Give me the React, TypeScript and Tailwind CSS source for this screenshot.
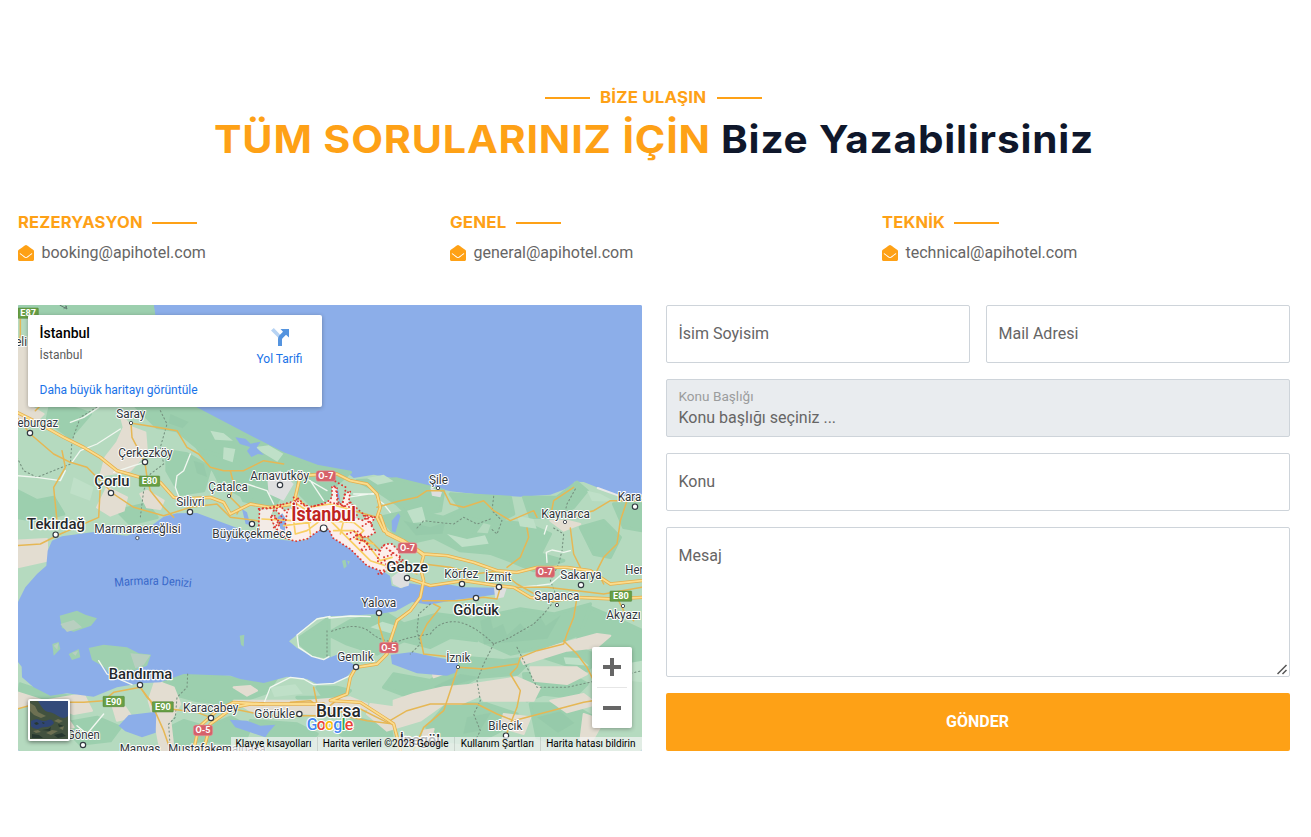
import React from "react";
import { FaEnvelopeOpen } from "react-icons/fa";

type Label = [text: string, x: number, y: number, width: number, size?: number];

const townLabels: Label[] = [
  ["Saray", 298, 343, 87], ["Çerkezköy", 304, 458, 163], ["Lüleburgaz", -43, 370, 166], ["Kırklareli", -105, 126, 135],
  ["Arnavutköy", 700, 527, 176], ["Çatalca", 574, 562, 119], ["Silivri", 478, 607, 85],
  ["Marmaraereğlisi", 232, 687, 259], ["Büyükçekmece", 586, 702, 238], ["Karacabey", 498, 1225, 166],
  ["Görükle", 712, 1241, 122], ["Gönen", 150, 1305, 98], ["Manyas", 308, 1346, 122],
  ["Mustafakemalpaşa", 454, 1346, 292], ["Gemlik", 961, 1072, 109], ["İznik", 1288, 1075, 72],
  ["Körfez", 1282, 823, 102], ["İzmit", 1404, 832, 79], ["Sakarya", 1630, 826, 124], ["Hendek", 1825, 811, 116],
  ["Sapanca", 1552, 889, 135], ["Yalova", 1033, 910, 105], ["Akyazı", 1768, 946, 103],
  ["Bilecik", 1414, 1279, 102], ["Şile", 1236, 539, 57], ["Kaynarca", 1573, 641, 146], ["Karasu", 1802, 592, 108],
];

const cityLabels: Label[] = [
  ["Çorlu", 232, 545, 105, 45], ["Tekirdağ", 30, 675, 174, 45], ["Bandırma", 275, 1126, 191, 45],
  ["Bursa", 897, 1240, 134, 54], ["İnegöl", 1148, 1322, 121, 45], ["Gebze", 1108, 803, 125, 45], ["Gölcük", 1309, 934, 137, 45],
];

const greenBadges: Label[] = [["E80", 367, 516, 61], ["E90", 258, 1177, 64], ["E90", 406, 1193, 63], ["E80", 1779, 861, 65], ["E87", 3, 12, 61]];
const redBadges: Label[] = [["O-7", 897, 500, 59], ["O-7", 1143, 716, 57], ["O-7", 1556, 788, 57], ["O-5", 1087, 1015, 57], ["O-5", 529, 1263, 58]];

const dots: [number, number, number][] = [
  [342, 357, 5], [384, 474, 8], [282, 567, 8], [39, 387, 8], [789, 543, 8], [636, 576, 5], [519, 624, 8],
  [116, 692, 8], [361, 702, 5], [705, 660, 8], [920, 673, 10], [369, 1143, 8], [582, 1242, 8], [847, 1230, 8],
  [198, 1323, 8], [1017, 1089, 8], [1323, 1089, 5], [1170, 822, 8], [1335, 840, 8], [1446, 849, 8],
  [1377, 882, 8], [1086, 927, 8], [1692, 843, 8], [1620, 903, 5], [1818, 906, 5], [1263, 552, 5],
  [1644, 654, 5], [1854, 608, 8], [1467, 1295, 8],
];

const forest = [
  "M0 0L405 0L410 32L0 32Z",
  "M100 305Q150 300 220 330L160 400L90 350Z",
  "M350 300L520 305L700 400L800 450L900 487L1000 505L960 540L880 520L830 500L800 560L770 610L680 590L650 520L590 500L540 430L480 380L420 370Z",
  "M450 440L510 450L580 490L560 560L490 570L450 500Z", "M0 560L60 590L110 580L140 630L60 650L0 640Z",
  "M300 620L390 600L420 640L340 660Z", "M560 440L660 470L720 540L700 590L610 540Z",
  "M840 530L960 530L940 590L880 600L850 570Z", "M1020 530L1140 525L1280 560L1270 620L1180 640L1140 600L1080 560Z",
  "M1090 640L1180 620L1280 640L1370 600L1420 620L1370 690L1500 700L1450 750L1330 740L1250 700L1160 720Z",
  "M1300 570L1480 580L1490 630L1430 660L1350 640Z", "M1520 580L1620 580L1680 535L1710 560L1670 610L1610 640L1540 640Z",
  "M1430 650L1530 660L1600 690L1570 750L1640 770L1550 800L1480 770L1400 740Z",
  "M1690 670L1760 650L1810 700L1780 760L1730 750Z", "M1790 600L1875 600L1875 680L1820 670Z",
  "M1000 950L1110 930L1160 960L1260 930L1340 940L1400 960L1380 1010L1300 1000L1240 1030L1160 1010L1080 1050L990 1020L930 990Z",
  "M850 1000L936 942L936 1060L885 1050L850 1020Z",
  "M1370 945L1510 915L1610 930L1720 900L1690 990L1580 1030L1480 1050L1390 1010Z",
  "M1720 910L1790 940L1875 980L1875 1090L1790 1080L1740 1030L1680 1010Z",
  "M1340 1060L1460 1070L1550 1060L1500 1110L1380 1120L1290 1170L1180 1180L1100 1150L1130 1110L1240 1130Z",
  "M440 1120L560 1110L700 1130L780 1120L750 1165L650 1200L540 1190L450 1165Z",
  "M500 1250L570 1270L640 1240L700 1270L680 1320L550 1310L470 1330L460 1270Z",
  "M10 1140L100 1170L190 1180L150 1215L70 1190L5 1180Z", "M130 1260L240 1240L310 1270L280 1310L190 1320Z",
  "M700 1250L840 1260L900 1290L860 1330L760 1310Z", "M1010 1240L1120 1270L1130 1330L1020 1320L970 1290Z",
  "M1290 1200L1410 1200L1500 1230L1450 1280L1370 1320L1280 1310L1230 1270Z",
  "M1520 1110L1640 1100L1710 1140L1670 1180L1580 1170L1530 1190Z",
  "M1540 1200L1660 1200L1730 1240L1710 1310L1640 1330L1560 1300Z",
  "M1640 1010L1750 1060L1710 1100L1640 1080L1580 1060Z",
  "M840 1180L920 1180L900 1150L960 1150L1000 1160L980 1180L890 1220Z",
];

const plains = [
  "M0 130L38 120L38 305L80 330L60 350L0 360Z", "M310 330L345 370L385 385L390 445L340 500L250 515L265 460L300 415L320 370Z",
  "M270 550L330 580L320 620L280 635L240 610Z", "M0 710L90 705L90 770L0 790Z",
  "M370 570L390 560L440 590L430 615L390 610Z",
  "M415 1130L470 1150L490 1200L460 1250L470 1338L430 1338L415 1260L395 1190Z",
  "M650 1150L700 1146L720 1160L690 1175Z", "M650 1190L870 1190L1000 1180L1050 1200L1050 1215L900 1230L700 1220Z",
  "M0 1165L80 1190L200 1170L225 1220L170 1230L90 1195L0 1210Z", "M285 1200L325 1210L345 1240L300 1250Z",
  "M1130 1190L1190 1170L1280 1150L1390 1140L1400 1170L1330 1200L1280 1200L1210 1250L1110 1280L1050 1230L1060 1200L1130 1210Z",
  "M1510 1060L1630 1020L1740 990L1780 995L1740 1030L1650 1040L1520 1080Z",
  "M1540 1090L1680 1090L1710 1110L1650 1140L1550 1130Z", "M1370 1140L1500 1120L1570 1150L1550 1190L1400 1190Z",
  "M1600 1190L1700 1170L1740 1200L1650 1225Z", "M1460 1230L1540 1240L1520 1290L1450 1270Z",
  "M1220 1280L1250 1275L1240 1310L1215 1310Z", "M1700 1230L1760 1250L1720 1320L1690 1310Z",
  "M1600 650L1650 650L1690 660L1640 680Z", "M90 1250L150 1240L170 1270L110 1280Z", "M1240 1080L1320 1095L1250 1120Z",
];

const motorways = [
  "M0 325L60 355L140 400L200 430L250 460L300 500L370 520L430 535L470 580L500 585L580 580L620 595L640 630L700 600L760 610L830 600L850 515L935 510L960 510L1000 530L1050 540L1080 570L1090 610L1080 640L1100 680L1160 710L1220 750L1290 755L1370 775L1440 800L1500 805L1560 790L1650 790L1720 800L1780 840L1875 830",
  "M1090 635L1110 690L1190 730L1220 755L1210 790L1220 830L1210 880L1180 920L1140 950L1120 1010L1110 1050L1080 1080L1017 1090L1000 1120L990 1170L940 1190L1030 1195L1100 1240L1130 1260L1150 1338",
  "M1180 825L1240 845L1340 830L1440 845L1490 850L1540 880L1610 890L1680 880L1790 885L1875 880",
  "M560 1338L580 1260L650 1210L700 1200L800 1200L920 1200",
  "M530 1338L545 1270L600 1220L650 1195L740 1200",
];
const roads = [
  "M0 340L40 390L110 450L160 475L210 490L250 530L290 570L350 610L440 635L520 610L600 600L640 640L720 650L800 660L890 640L1010 620L1080 640",
  "M342 357L345 400L384 475L390 520L400 560L440 610L470 640", "M10 45V95L3 120M55 320L70 305M340 357L420 370L480 380L510 430L545 450L580 490L620 500L680 500L740 470L800 480",
  "M250 545L245 640L130 690L70 720L0 725", "M135 440L145 490L110 550L120 650", "M640 500L650 540L640 580L670 610L660 630",
  "M1080 610L1150 590L1200 580L1230 560L1280 560L1300 600L1340 610L1400 590L1430 620L1480 650L1550 620L1560 640",
  "M1600 640L1610 590L1670 550M1650 640L1730 620L1780 590L1875 590M1830 590L1810 650L1800 720L1760 760L1740 800L1760 840",
  "M1530 672L1535 700L1510 760L1470 790M1660 672L1670 750L1690 790M1875 850L1760 870L1680 860L1590 850L1480 850",
  "M860 640L950 640L1000 690L1050 700L1110 760L1160 790L1200 810", "M1220 780L1300 790L1370 810L1450 800L1500 840L1570 880",
  "M1216 890L1320 890L1400 880L1440 885L1450 850M1086 930L1085 960L1100 1010L1105 1050M1250 900L1270 910L1230 960L1210 1000L1220 1050L1310 1060",
  "M1680 880L1670 940L1650 990L1640 1020L1560 1040L1510 1060L1500 1090L1480 1110L1510 1160L1500 1210L1480 1260L1467 1295",
  "M1323 1090L1300 1160L1280 1220L1220 1270L1190 1338", "M0 1215L90 1190L150 1195L200 1195L260 1190L290 1165L370 1150L400 1190L440 1280L460 1338",
  "M460 1215L540 1225L580 1240M650 1215L750 1235L900 1235L1030 1215L1110 1255L1170 1220L1240 1200L1380 1200L1440 1230L1490 1250L1700 1195L1790 1180",
  "M890 1150L900 1200L920 1240M1323 1090L1400 1095L1500 1080M1640 1010L1680 1050L1710 1090L1730 1130M1850 950L1820 920L1800 880",
  "M370 1150L390 1180L420 1210L460 1210M970 1180L920 1220L880 1190L820 1195M1130 1260L1050 1250L1000 1240",
];
const lanes = [
  "M0 515L60 520L130 530L145 500M160 355L200 340L245 310M165 475L190 440L240 420L310 375",
  "M520 450L500 500L480 515L475 550L490 590M290 505L350 485L384 475",
  "M690 540L750 560L770 600M870 525L930 560M1010 570L1070 570M1080 585L1100 600L1120 625M880 530L920 590M990 580L1070 568",
  "M1590 665L1582 690M1590 775L1588 745L1605 738L1640 745L1660 740",
  "M1500 850L1560 845L1600 840L1635 810M180 1265L210 1290L260 1230M740 1200L760 1150L820 1120L860 1125L890 1142L950 1138L1000 1115",
  "M245 1070L270 1110L345 1142M939 937L900 945L840 993L845 1030L885 1057L920 1067L936 1058M936 942L1000 936L1060 938",
];
const borders =
  "M430 320L450 360L430 430L440 480L400 510L380 560L370 640M240 310L190 340L165 410L160 480L110 500L60 520L20 500L0 460M1430 577L1425 620L1455 650L1440 690L1420 672M1200 672L1220 650L1260 655L1310 660L1340 640L1380 660L1420 645M1675 555L1650 600L1640 640M1610 672L1640 690L1635 740L1625 780L1600 830L1620 880L1580 930L1550 960L1480 1000L1430 1020Q1380 970 1330 955Q1270 945 1240 990Q1170 1000 1150 1010Q1100 1020 1060 985T936 985M1240 900L1205 930L1200 980L1210 1020L1180 1050M1430 1020L1400 1080L1380 1130L1390 1190L1370 1230L1390 1280L1360 1338M1500 1030L1540 1110L1560 1150L1650 1150L1740 1130L1790 1120L1875 1100M512 1110L510 1150L480 1180L475 1240L455 1260L460 1338M930 980L930 1060";

const districtShape =
  "M725 615L770 610L800 645L785 665L775 635L760 640L780 680L800 700L835 712L870 705L905 680L935 675L948 702L1000 735L1050 785L1090 800L1095 810L1115 790L1150 765L1145 740L1125 720L1105 720L1085 740L1060 735L1050 715L1020 705L1015 690L1050 700L1075 685L1060 660L1075 640L1050 635L1040 650L1010 640L1015 610L995 595L1000 560L985 570L975 600L960 600L960 550L945 545L945 580L930 595L880 610L860 600L840 580L835 610L800 620L790 600L755 615L740 612Z";

const districtDots =
  "M728 618L725 655L727 690M955 532L990 552M955 550L965 595M985 560L975 610L1010 590M940 595L1000 610L1025 640M1010 605L1050 640L1070 670M1000 705L1030 690L1050 720L1030 740L1060 735M1100 725L1130 750L1100 760L1110 790L1085 812L1080 800M1120 740L1160 770L1130 780L1150 790M770 620L800 600L840 590L870 610L920 600M765 635L790 655L770 670L795 685M810 625L805 660L820 700M830 580L845 620M1040 635L1055 655L1030 670M1055 640L1070 640M990 690L1020 680L1040 705L1020 725M1090 740L1080 770L1100 780";

function MapCanvas() {
  return (
    <svg viewBox="3 3 1872 1338" preserveAspectRatio="none" className="block h-full w-full" fontFamily="Roboto, sans-serif" aria-label="İstanbul">
      <rect width="1880" height="1345" fill="#8caee9" />
      <path d="M0 0L410 0L414 45L430 240L520 308L600 348L700 403L800 450L840 465L900 485L950 500L985 502L1010 522L1070 512L1140 525L1230 545L1300 562L1400 573L1510 578L1600 572L1640 557L1665 545L1672 533L1700 534L1740 550L1800 573L1875 590V1345H0Z" fill="#b5dabf" />
      <g fill="#9ccfae" stroke="#9ccfae" strokeWidth="10" strokeLinejoin="round">
        {forest.map((d) => <path key={d} d={d} />)}
      </g>
      <g fill="#94c8a7" opacity=".65">
        <path d="M460 330l55 24-18 19-42-15zM530 470l30 9 10 40-30-11zM1160 650l80 20 45-15-9 34-80 5zM1390 950l30-12 8 36 30-14 12 33 40-35 20 24 38-46 18 29 45-31-40 70-190 17zM1250 1148l80-38 60 10-120 36zM1720 1010l50 26 70 6-11 28-72-19zM1350 1240l72-14-34 54-49 9zM1560 1240l70-18 42 35-49 29z" />
      </g>
      <g fill="#bfe0c8">
        <path d="M580 380l40 8 28 22-54-3zM620 430l35 5-8 40-29-10zM710 430l45-6 44 25-18 24zM1050 522l50-10 30 20-48 10zM1170 620l45-12 12 45-38 4zM1500 635l49 10 10 29-50-7zM1710 560l40 9 45 24-70-2zM1290 690l60 15 54-11 11 25-80 10zM1060 970l60 18 20-22-44-13zM1640 1060l50 2 26 23-70-5zM1820 1080l55-10v65l-42-5zM170 520l60 30-11 40-60-22zM500 1210l60-5 20 20-70 3zM760 1150l75-9 22 28-85 10zM1160 1310l55-14 16 34-65 8z" />
      </g>
      <g fill="#e3ddd1" stroke="#e3ddd1" strokeWidth="6" strokeLinejoin="round">
        {plains.map((d) => <path key={d} d={d} />)}
      </g>

      <path d="M0 900L25 850L60 810L88 785L92 740L105 710L135 697L230 684L330 695L390 675L440 638L480 628L540 627L610 653L669 675L719 703L770 705L834 712L870 708L899 680L939 678L949 702L1009 740L1079 790L1119 815L1124 845L1154 853L1179 838L1221 845L1276 838L1340 850L1440 851L1444 870L1366 882L1316 887L1236 902L1186 894L1136 922L1086 930L1016 934L936 937L900 942L840 992L816 1012L840 1032L885 1057L920 1067L966 1050L1017 1087L986 1122L956 1137L900 1140L870 1125L810 1118L740 1137L670 1125L640 1115L500 1110L430 1135L370 1138L300 1150L230 1178L150 1168L100 1175L50 1150L15 1120L14 1088L0 1070Z" fill="#8caee9" />
      <path d="M1121 1052L1186 1044L1250 1058L1324 1072L1318 1105L1290 1115L1200 1108L1125 1080ZM305 1265L335 1233L418 1223L416 1286L375 1300L325 1282ZM638 1247L690 1250L730 1265L775 1262L755 1285L745 1300L700 1285L655 1270ZM655 400l30 4 16 15 30-6-12 18 22 22-18-3-20 9-13-18 9-12-30-9zM675 615l15 10 10 38-14-3zM950 540l14 20 8 40-14-28zM1124 650l20-22 6 8-15 50-10-5z" fill="#8caee9" />
      <path d="M1124 820L1150 800L1180 815L1175 845L1150 852L1128 840ZM1430 845L1470 850L1460 880L1435 885ZM750 515L790 500L830 540L800 590L755 570ZM1240 550L1275 565L1270 580L1245 575Z" fill="#dedfdf" />
      <path d="M215 1032L260 1022L330 1030L365 1048L402 1052L390 1085L350 1100L310 1105L280 1112L262 1090L225 1068ZM128 935L180 920L205 932L240 943L222 965L170 983L135 972ZM106 1020L125 1014L130 1035L110 1055ZM155 1050L185 1035L190 1060L165 1068ZM668 995L682 992L680 1028L672 1022ZM975 770l10-3 4 20-8 7zM990 770l8 2 -3 10z" fill="#9fd0b0" />
      <path d="M130 960l40-12 25 22-45 14zM340 1048l60 5-20 30-25 10zM110 1025l14-8-3 20zM165 1046l18-5-7 14z" fill="#b8cfc0" />

      <g fill="none" strokeLinejoin="round" strokeLinecap="round">
        <path d={borders} stroke="#76917f" strokeWidth="3.200" strokeDasharray="4 8" />
        <g stroke="#f1f7f0" strokeWidth="4">{lanes.map((d) => <path key={d} d={d} />)}</g>
        <path d="M1742 552L1805 575L1840 584" stroke="#e8e8e8" strokeWidth="6" />
        <g stroke="#e6b754" strokeWidth="4.5">{roads.map((d) => <path key={d} d={d} />)}</g>
      </g>
      <path d="M728 618L770 612L760 640L780 690L728 694Z" fill="#f3ebe6" />
      <path d={districtShape} fill="#fcefec" />
      <path d="M782 640l14-12 10 16-2 38-14-8z" fill="#8caee9" />
      <g fill="none" strokeLinejoin="round" strokeLinecap="round">
        <g stroke="#e6ae4b" strokeWidth="10">{motorways.map((d) => <path key={d} d={d} />)}</g>
        <g stroke="#fbdc8c" strokeWidth="5.5">{motorways.map((d) => <path key={d} d={d} />)}</g>
        <g stroke="#f8cf62" strokeWidth="5">
          <path d="M735 645L830 650L835 690L870 680L910 650L1010 655L1040 680L1015 705L1070 720M840 600L870 620L880 690M950 680L1010 680L1050 720L1090 770L1125 760M940 650L990 700L1060 770L1120 790M980 650L970 690M800 665L880 655" />
          <path d="M840 580L870 610L940 600L1010 620" />
        </g>
        <path d={districtShape} stroke="#dc3a34" strokeWidth="5.500" strokeDasharray="0.5 11" />
        <path d={districtDots} stroke="#dc3a34" strokeWidth="5.500" strokeDasharray="0.5 11" />
      </g>

      <path d="M128 3l22 12-4-10M140 14l10-8" fill="none" stroke="#5f7a70" strokeWidth="3" />
      <g fill="#fff" stroke="#333a42">
        {dots.map(([x, y, r]) => <circle key={`${x}-${y}`} cx={x} cy={y} r={r} strokeWidth={r < 6 ? 2.5 : 3.6} />)}
      </g>

      <g fontSize="38" fill="#30363b" stroke="#fff" strokeWidth="6" strokeLinejoin="round" paintOrder="stroke">
        {townLabels.map(([t, x, y, w]) => <text key={t} x={x} y={y} textLength={w} lengthAdjust="spacingAndGlyphs">{t}</text>)}
      </g>
      <g fontWeight="500" fill="#24282c" stroke="#fff" strokeWidth="7" strokeLinejoin="round" paintOrder="stroke">
        {cityLabels.map(([t, x, y, w, s]) => <text key={t} x={x} y={y} fontSize={s} textLength={w} lengthAdjust="spacingAndGlyphs">{t}</text>)}
      </g>
      <text x="823" y="651" fontSize="58" fontWeight="700" textLength="194" lengthAdjust="spacingAndGlyphs" fill="#c0241f" stroke="#fff" strokeWidth="7" strokeLinejoin="round" paintOrder="stroke">İstanbul</text>
      <path id="seaCurve" d="M293 848Q410 835 530 851" fill="none" />
      <text fontSize="36" fill="#3868c9"><textPath href="#seaCurve" textLength="230" lengthAdjust="spacingAndGlyphs">Marmara Denizi</textPath></text>

      <g fontSize="26" fontWeight="700" fill="#fff" textAnchor="middle">
        {greenBadges.map(([t, x, y, w]) => (
          <g key={`${x}`}><rect x={x} y={y} width={w} height="31" rx="2" fill="#689f45" stroke="#4f8137" strokeWidth="1.5" /><text x={x + w / 2} y={y + 25} textLength="47" lengthAdjust="spacingAndGlyphs">{t}</text></g>
        ))}
        {redBadges.map(([t, x, y, w]) => (
          <g key={`${x}`}><rect x={x} y={y} width={w} height="32" rx="8" fill="#d6616a" stroke="#e9999e" strokeWidth="1.5" /><text x={x + w / 2} y={y + 25} textLength="45" lengthAdjust="spacingAndGlyphs">{t}</text></g>
        ))}
      </g>
      <text x="869" y="1277" fontSize="48" fontWeight="500" fontFamily="Roboto, sans-serif" textLength="140" stroke="#fff" strokeWidth="6" strokeLinejoin="round" paintOrder="stroke">
        <tspan fill="#4285f4">G</tspan><tspan fill="#ea4335">o</tspan><tspan fill="#fbbc05">o</tspan><tspan fill="#4285f4">g</tspan><tspan fill="#34a853">l</tspan><tspan fill="#ea4335">e</tspan>
      </text>
    </svg>
  );
}

function PlaceCard() {
  return (
    <div className="absolute left-[10px] top-[10px] flex h-[92px] w-[294px] justify-between rounded-[2px] bg-white pl-3 pr-[19px] shadow-[0_1px_4px_rgba(0,0,0,0.3)]">
      <div className="flex flex-col whitespace-nowrap">
        <div className="mt-2.5 text-[14px] font-medium leading-4 text-black">İstanbul</div>
        <div className="mt-[6px] text-[12px] leading-4 text-[#5b5b5b]">İstanbul</div>
        <div className="mt-[19px] text-[12px] leading-4 text-[#1a73e8]">Daha büyük haritayı görüntüle</div>
      </div>
      <div className="flex flex-col items-center pt-[12px] text-[12px] leading-4 text-[#1a73e8]">
        <svg width="20" height="20" viewBox="0 0 20 20" className="mb-[4px]">
          <path d="M1 3.5L3.8 1L10 7.5V11L8.5 11Z" fill="#b7d3f3" />
          <path d="M8 19V12Q8 9.800 9.500 8.300L13 4.800L10.500 2H19V10.500L16 7.800L12.500 11.300Q12 11.800 12 12.800V19Z" fill="#5594df" />
        </svg>
        Yol Tarifi
      </div>
    </div>
  );
}

function MapPanel() {
  return (
    <div className="relative h-[446px] overflow-hidden rounded-[2px] bg-[#8caee9]">
      <MapCanvas />
      <PlaceCard />
      <div className="absolute bottom-[10px] left-[10px] h-[42px] w-[42px] rounded-[2px] border-2 border-white bg-[#384c3d] shadow-[0_1px_4px_rgba(0,0,0,0.5)]">
        <svg viewBox="0 0 38 38" className="block h-full w-full">
          <rect width="38" height="38" fill="#42523f" />
          <path d="M8 0H38V15Q34 19 28 15T18 11T8 0Z" fill="#344b7a" />
          <path d="M1 20Q6 17 10 19T18 19T24 22Q21 26 16 26T8 28Q3 28 1 25Z" fill="#2f4575" />
          <path d="M0 2l5 3 3 6 8 4-5 2-7-3-4-4zM24 20l4-2 5 2-4 2zM3 30l5-1 3 2-5 1zM16 32l6-3 6 1-7 4zM29 27l5-2-1 4z" fill="#6d7052" />
          <path d="M4 22l3-1 2 2-3 1zM12 21l3 1-2 1zM12 29l6-1 3-2-1 4zM28 23l6 2-5 1zM2 33l7 1 4 3H2zM24 34l8-2 4 3-8 2z" fill="#27382f" />
        </svg>
      </div>
      <div className="absolute bottom-[23px] right-[10px] flex h-[81px] w-[40px] flex-col items-center rounded-[2px] bg-white shadow-[0_1px_4px_rgba(0,0,0,0.3)]">
        <div className="flex h-10 items-center">
          <svg width="18" height="18" viewBox="0 0 18 18" fill="#666"><path d="M7 0H11V7H18V11H11V18H7V11H0V7H7Z" /></svg>
        </div>
        <div className="h-px w-[30px] bg-[#e6e6e6]" />
        <div className="flex h-10 items-center"><div className="h-1 w-[18px] bg-[#666]" /></div>
      </div>
      <div className="absolute bottom-0 right-0 flex h-[14px] w-[411px] items-center justify-between whitespace-nowrap bg-[#f5f5f5]/70 pl-[5px] pr-[6px] text-[10px] leading-[14px] text-black">
        <span>Klavye kısayolları</span>
        <span className="-mr-[1px] h-full w-px bg-black/10" />
        <span>Harita verileri ©2023 Google</span>
        <span className="h-full w-px bg-black/10" />
        <span>Kullanım Şartları</span>
        <span className="h-full w-px bg-black/10" />
        <span>Harita hatası bildirin</span>
      </div>
    </div>
  );
}

function Contact({ title, mail, titleClass }: { title: string; mail: string; titleClass: string }) {
  return (
    <div>
      <h6 className="flex h-5 items-center gap-[10px] whitespace-nowrap font-['Inter'] text-[15.5px] font-bold text-[#fea116]">
        <span className={titleClass}>{title}</span>
        <span className="h-[2px] w-[45px] bg-[#fea116]" />
      </h6>
      <p className="mt-2 flex h-6 items-center gap-2 text-[16px] text-[#666565]">
        <FaEnvelopeOpen className="mb-px text-[#fea116]" size={16} />
        {mail}
      </p>
    </div>
  );
}

function Field({ id, label }: { id: string; label: string }) {
  return (
    <div className="relative h-[58px]">
      <input id={id} className="h-full w-full rounded-[2px] border border-[#ced4da] bg-white px-3 outline-none" />
      <label htmlFor={id} className="absolute left-[13px] top-[17px] leading-6">{label}</label>
    </div>
  );
}

export default function App() {
  return (
    <main className="min-h-[837px] w-full bg-white pl-[17.5px] pt-[88px] font-['Roboto',sans-serif] text-[16px] text-[#666565]">
      <div className="w-[1272px]">
        <header className="flex flex-col items-center whitespace-nowrap font-['Inter'] font-bold text-[#fea116]">
          <h6 className="flex h-5 items-center gap-[10px] text-[15.5px]">
            <span className="h-[2px] w-[45px] bg-[#fea116]" />
            <span className="w-[107px] origin-left scale-x-[1.09] tracking-[0.01em]">BİZE ULAŞIN</span>
            <span className="h-[2px] w-[45px] bg-[#fea116]" />
          </h6>
          <h1 className="mt-[7px] flex h-12 items-center text-[38.5px] leading-[48px]">
            <span className="w-[507px] origin-left scale-x-[1.072] tracking-[0.02em]">TÜM SORULARINIZ İÇİN</span>
            <span className="w-[372px] origin-left scale-x-[1.052] tracking-[0.02em] text-[#0f172b]">Bize Yazabilirsiniz</span>
          </h1>
        </header>

        <section className="mt-[50px] grid grid-cols-3 gap-6">
          <Contact title="REZERYASYON" mail="booking@apihotel.com" titleClass="w-[124px] origin-left scale-x-[1.068] tracking-[0.01em]" />
          <Contact title="GENEL" mail="general@apihotel.com" titleClass="w-[56px] origin-left scale-x-[1.09] tracking-[0.01em]" />
          <Contact title="TEKNİK" mail="technical@apihotel.com" titleClass="w-[62px] origin-left scale-x-[1.065] tracking-[0.01em]" />
        </section>

        <section className="mt-[40px] grid grid-cols-2 gap-6">
          <MapPanel />
          <form className="flex flex-col gap-4">
            <div className="grid grid-cols-2 gap-4">
              <Field id="name" label="İsim Soyisim" />
              <Field id="email" label="Mail Adresi" />
            </div>
            <div className="flex h-[58px] flex-col rounded-[2px] border border-[#ced4da] bg-[#e9ecef] pl-3 pt-[6px]">
              <span className="text-[13.6px] leading-5 text-[#9b9c9d]">Konu Başlığı</span>
              <span className="leading-6">Konu başlığı seçiniz ...</span>
            </div>
            <Field id="subject" label="Konu" />
            <div className="relative h-[150px]">
              <textarea id="message" className="block h-full w-full resize-none rounded-[2px] border border-[#ced4da] bg-white px-3 outline-none" />
              <label htmlFor="message" className="absolute left-[13px] top-[17px] leading-6">Mesaj</label>
              <svg width="11" height="11" viewBox="0 0 11 11" className="absolute bottom-[2px] right-[2px]" fill="none" stroke="#555" strokeWidth="1.5">
                <path d="M0.500 10L9.500 1M5.500 10L9.500 6" />
              </svg>
            </div>
            <button type="button" className="h-[58px] rounded-[2px] bg-[#fea116] text-[16px] font-bold text-white">GÖNDER</button>
          </form>
        </section>
      </div>
    </main>
  );
}
